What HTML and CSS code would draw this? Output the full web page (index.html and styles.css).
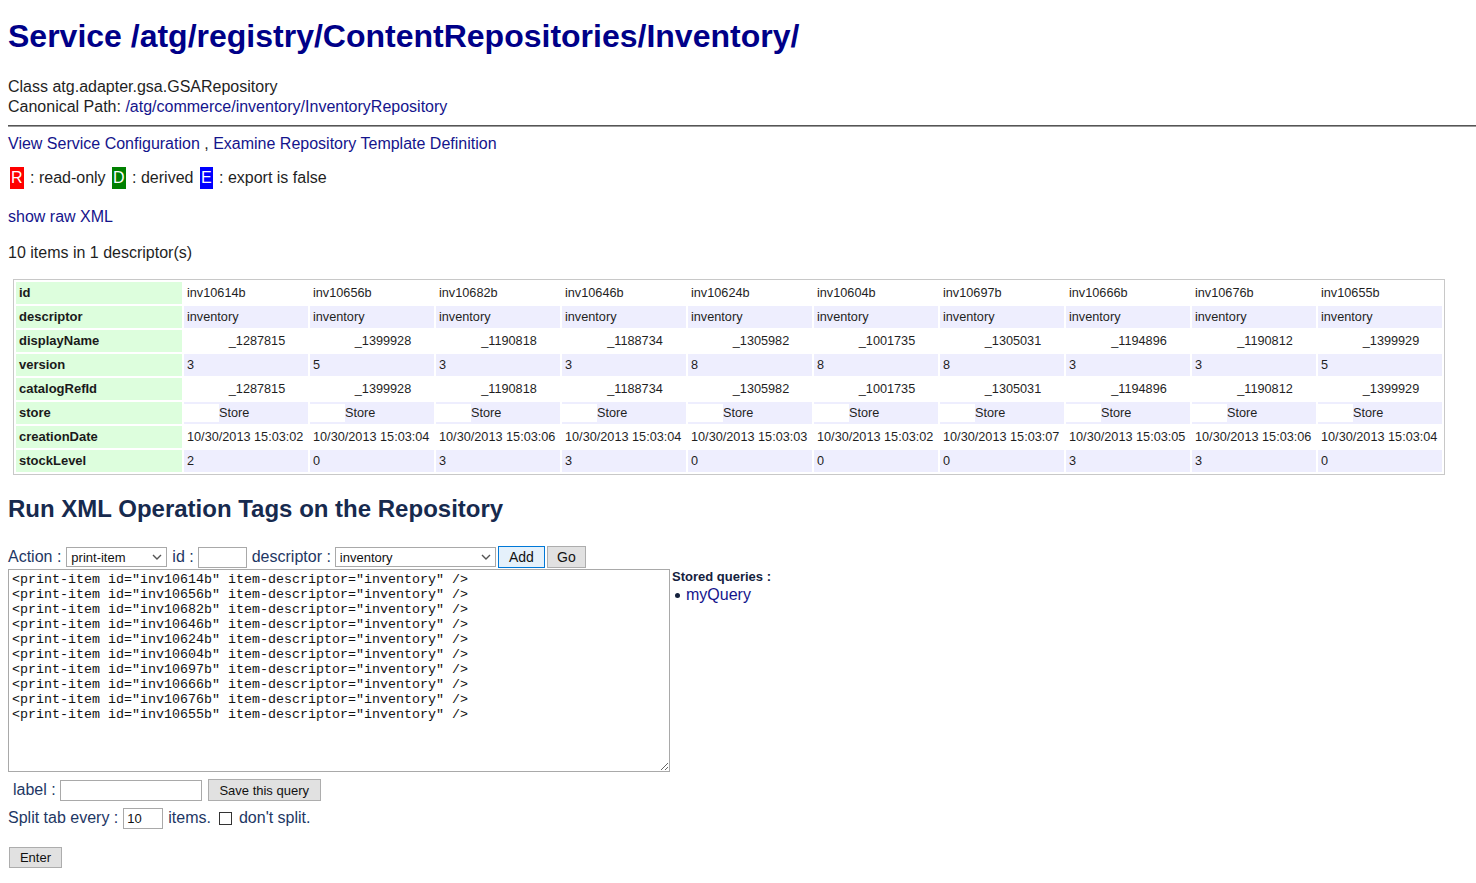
FILE: index.html
```html
<!DOCTYPE html>
<html>
<head>
<meta charset="utf-8">
<title>Service /atg/registry/ContentRepositories/Inventory/</title>
<link rel="stylesheet" href="styles.css">
</head>
<body>
<h1 class="title">Service /atg/registry/ContentRepositories/Inventory/</h1>
<div class="info">
  <div>Class atg.adapter.gsa.GSARepository</div>
  <div>Canonical Path: <a class="lnk" href="#">/atg/commerce/inventory/InventoryRepository</a></div>
</div>
<hr class="rule">
<div class="links"><a class="lnk" href="#">View Service Configuration</a> , <a class="lnk" href="#">Examine Repository Template Definition</a></div>
<div class="legend"><span class="badge b-r">R</span> : read-only <span class="badge b-d">D</span> : derived <span class="badge b-e">E</span> : export is false</div>
<div class="raw"><a class="lnk" href="#">show raw XML</a></div>
<div class="count">10 items in 1 descriptor(s)</div>

<table class="items">
  <tr class="odd">
    <th>id</th>
    <td>inv10614b</td><td>inv10656b</td><td>inv10682b</td><td>inv10646b</td><td>inv10624b</td><td>inv10604b</td><td>inv10697b</td><td>inv10666b</td><td>inv10676b</td><td>inv10655b</td>
  </tr>
  <tr class="even">
    <th>descriptor</th>
    <td>inventory</td><td>inventory</td><td>inventory</td><td>inventory</td><td>inventory</td><td>inventory</td><td>inventory</td><td>inventory</td><td>inventory</td><td>inventory</td>
  </tr>
  <tr class="odd">
    <th>displayName</th>
    <td class="ctr">_1287815</td><td class="ctr">_1399928</td><td class="ctr">_1190818</td><td class="ctr">_1188734</td><td class="ctr">_1305982</td><td class="ctr">_1001735</td><td class="ctr">_1305031</td><td class="ctr">_1194896</td><td class="ctr">_1190812</td><td class="ctr">_1399929</td>
  </tr>
  <tr class="even">
    <th>version</th>
    <td>3</td><td>5</td><td>3</td><td>3</td><td>8</td><td>8</td><td>8</td><td>3</td><td>3</td><td>5</td>
  </tr>
  <tr class="odd">
    <th>catalogRefId</th>
    <td class="ctr">_1287815</td><td class="ctr">_1399928</td><td class="ctr">_1190818</td><td class="ctr">_1188734</td><td class="ctr">_1305982</td><td class="ctr">_1001735</td><td class="ctr">_1305031</td><td class="ctr">_1194896</td><td class="ctr">_1190812</td><td class="ctr">_1399929</td>
  </tr>
  <tr class="even">
    <th>store</th>
    <td class="store"><span class="blank"></span>Store</td><td class="store"><span class="blank"></span>Store</td><td class="store"><span class="blank"></span>Store</td><td class="store"><span class="blank"></span>Store</td><td class="store"><span class="blank"></span>Store</td><td class="store"><span class="blank"></span>Store</td><td class="store"><span class="blank"></span>Store</td><td class="store"><span class="blank"></span>Store</td><td class="store"><span class="blank"></span>Store</td><td class="store"><span class="blank"></span>Store</td>
  </tr>
  <tr class="odd">
    <th>creationDate</th>
    <td>10/30/2013 15:03:02</td><td>10/30/2013 15:03:04</td><td>10/30/2013 15:03:06</td><td>10/30/2013 15:03:04</td><td>10/30/2013 15:03:03</td><td>10/30/2013 15:03:02</td><td>10/30/2013 15:03:07</td><td>10/30/2013 15:03:05</td><td>10/30/2013 15:03:06</td><td>10/30/2013 15:03:04</td>
  </tr>
  <tr class="even">
    <th>stockLevel</th>
    <td>2</td><td>0</td><td>3</td><td>3</td><td>0</td><td>0</td><td>0</td><td>3</td><td>3</td><td>0</td>
  </tr>
</table>

<h2 class="run">Run XML Operation Tags on the Repository</h2>

<form class="xmlform">
  <div class="actrow">
    <span class="lbl">Action :</span>
    <span class="selwrap sel-action">
      <select class="sel"><option>print-item</option></select>
      <svg class="chev" width="10" height="6" viewBox="0 0 10 6"><path d="M1 1 L5 5 L9 1" fill="none" stroke="#555" stroke-width="1.4"/></svg>
    </span>
    <span class="lbl">id :</span>
    <input class="txt id-in" type="text">
    <span class="lbl">descriptor :</span>
    <span class="selwrap sel-desc">
      <select class="sel"><option>inventory</option></select>
      <svg class="chev" width="10" height="6" viewBox="0 0 10 6"><path d="M1 1 L5 5 L9 1" fill="none" stroke="#555" stroke-width="1.4"/></svg>
    </span>
    <button type="button" class="btn btn-focus">Add</button>
    <button type="button" class="btn btn-go">Go</button>
  </div>
  <div class="editrow">
    <textarea class="xml" spellcheck="false">&lt;print-item id="inv10614b" item-descriptor="inventory" /&gt;
&lt;print-item id="inv10656b" item-descriptor="inventory" /&gt;
&lt;print-item id="inv10682b" item-descriptor="inventory" /&gt;
&lt;print-item id="inv10646b" item-descriptor="inventory" /&gt;
&lt;print-item id="inv10624b" item-descriptor="inventory" /&gt;
&lt;print-item id="inv10604b" item-descriptor="inventory" /&gt;
&lt;print-item id="inv10697b" item-descriptor="inventory" /&gt;
&lt;print-item id="inv10666b" item-descriptor="inventory" /&gt;
&lt;print-item id="inv10676b" item-descriptor="inventory" /&gt;
&lt;print-item id="inv10655b" item-descriptor="inventory" /&gt;</textarea>
    <div class="stored">
      <div class="stored-title">Stored queries :</div>
      <ul class="qlist"><li><a class="lnk" href="#">myQuery</a></li></ul>
    </div>
  </div>
  <div class="labelrow">
    <span class="lbl">label :</span>
    <input class="txt label-in" type="text">
    <button type="button" class="btn btn-save">Save this query</button>
  </div>
  <div class="splitrow">
    <span class="lbl">Split tab every :</span>
    <input class="txt split-in" type="text" value="10">
    <span class="lbl">items.</span>
    <span class="chk"></span>
    <span class="lbl">don't split.</span>
  </div>
  <div class="enterrow">
    <button type="button" class="btn">Enter</button>
  </div>
</form>
</body>
</html>
```
FILE: styles.css
```css
html, body {
  margin: 0;
  padding: 0;
  background: #ffffff;
}
body {
  padding: 0 8px;
  font-family: "Liberation Sans", Arial, sans-serif;
  font-size: 16px;
  color: #1f1f1f;
}
.lnk {
  color: #14148c;
  text-decoration: none;
}
.title {
  margin: 18px 0 0 0;
  font-size: 32px;
  line-height: 37px;
  font-weight: bold;
  color: #000088;
}
.info {
  margin-top: 22px;
  line-height: 20px;
}
.rule {
  margin: 8px -8px 0 0;
  border: 0;
  border-top: 1px solid #555555;
  border-bottom: 1px solid #9a9a9a;
  height: 0;
}
.links {
  margin-top: 7px;
  line-height: 20px;
}
.legend {
  margin-top: 14px;
  line-height: 20px;
}
.badge {
  padding: 2px 1px 3px 1px;
  margin: 0 2px;
  color: #ffffff;
}
.b-r { background: #ff0000; }
.b-d { background: #008000; }
.b-e { background: #0000ff; }
.raw {
  margin-top: 19px;
  line-height: 20px;
}
.count {
  margin-top: 16px;
  line-height: 20px;
}
.items {
  margin: 16px 0 0 5px;
  border: 1px solid #c8c8c8;
  border-spacing: 2px;
  font-size: 12.7px;
  color: #1f1f1f;
}
.items th, .items td {
  height: 22px;
  line-height: 22px;
  padding: 0 3px;
  vertical-align: top;
  white-space: nowrap;
  box-sizing: border-box;
}
.items th {
  width: 166px;
  text-align: left;
  font-size: 13px;
  font-weight: bold;
  background: #ddfedd;
  color: #1a1a1a;
}
.items td {
  width: 124px;
  text-align: left;
}
.items .even td { background: #eeeefe; }
.items .odd td { background: #ffffff; }
.items td.ctr {
  text-align: center;
  padding-left: 22px;
  padding-right: 0;
}
.items td.store {
  padding: 0;
}
.blank {
  display: inline-block;
  width: 35px;
  height: 18px;
  margin-top: 2px;
  background: #ffffff;
  vertical-align: top;
}
.run {
  margin: 20px 0 0 0;
  font-size: 24px;
  line-height: 28px;
  font-weight: bold;
  color: #172a4e;
}
.xmlform {
  margin-top: 22px;
  color: #1e3764;
}
.actrow, .labelrow, .splitrow {
  display: flex;
  align-items: center;
}
.actrow {
  height: 24px;
}
.lbl {
  font-size: 16px;
  line-height: 20px;
}
.actrow .lbl { margin-right: 4px; }
.selwrap {
  position: relative;
  display: inline-block;
  margin-right: 5px;
}
.sel-action { margin-left: 1px; }
.sel-desc { margin-right: 2px; }
.sel {
  -webkit-appearance: none;
  appearance: none;
  display: block;
  height: 20px;
  padding: 0 0 0 4px;
  border: 1px solid #a9a9a9;
  background: #ffffff;
  font-family: "Liberation Sans", Arial, sans-serif;
  font-size: 13px;
  color: #111111;
  border-radius: 0;
  box-sizing: border-box;
}
.sel-action .sel { width: 101px; }
.sel-desc .sel { width: 161px; }
.chev {
  position: absolute;
  right: 5px;
  top: 7px;
}
.txt {
  height: 21px;
  border: 1px solid #a9a9a9;
  padding: 0 3px;
  box-sizing: border-box;
  font-family: "Liberation Sans", Arial, sans-serif;
  font-size: 13px;
  color: #111111;
  border-radius: 0;
  outline: none;
}
.id-in {
  width: 49px;
  margin-right: 5px;
}
.btn {
  height: 22px;
  padding: 0 10px;
  border: 1px solid #adadad;
  background: #e1e1e1;
  font-family: "Liberation Sans", Arial, sans-serif;
  font-size: 13px;
  color: #111111;
  border-radius: 0;
  box-sizing: border-box;
  margin-right: 2px;
}
.btn-focus {
  background: #e5f1fb;
  border-color: #0078d7;
}
.actrow .btn { font-size: 14px; }
.btn-focus { width: 47px; padding: 0; }
.btn-go { width: 39px; padding: 0; }
.btn-save { width: 113px; padding: 0; }
.editrow {
  display: flex;
  align-items: flex-start;
}
.xml {
  width: 662px;
  height: 203px;
  margin: 0;
  padding: 2px 3px;
  border: 1px solid #a9a9a9;
  box-sizing: border-box;
  font-family: "Liberation Mono", "Courier New", monospace;
  font-size: 13.33px;
  line-height: 15px;
  color: #111111;
  resize: both;
  white-space: pre;
  overflow: hidden;
}
.stored {
  margin-left: 2px;
}
.stored-title {
  font-size: 13px;
  font-weight: bold;
  line-height: 16px;
  color: #14213d;
}
.qlist {
  margin: 0;
  padding: 0 0 0 14px;
  list-style: none;
  font-size: 16px;
  line-height: 20px;
  position: relative;
}
.qlist li::before {
  content: "";
  position: absolute;
  left: 3px;
  top: 8px;
  width: 5px;
  height: 5px;
  border-radius: 50%;
  background: #14213d;
}
.labelrow {
  margin-top: 7px;
  height: 22px;
}
.labelrow .lbl {
  margin-left: 5px;
  margin-right: 4px;
}
.label-in {
  width: 142px;
  margin-right: 6px;
}
.splitrow {
  margin-top: 6px;
  height: 22px;
}
.split-in {
  width: 40px;
  margin: 0 5px 0 5px;
}
.chk {
  display: inline-block;
  width: 13px;
  height: 13px;
  border: 1px solid #333333;
  margin: 0 7px 0 8px;
  box-sizing: border-box;
}
.enterrow {
  margin-top: 18px;
}
.enterrow .btn {
  margin-left: 1px;
  width: 53px;
  height: 21px;
  padding: 0;
}
```
